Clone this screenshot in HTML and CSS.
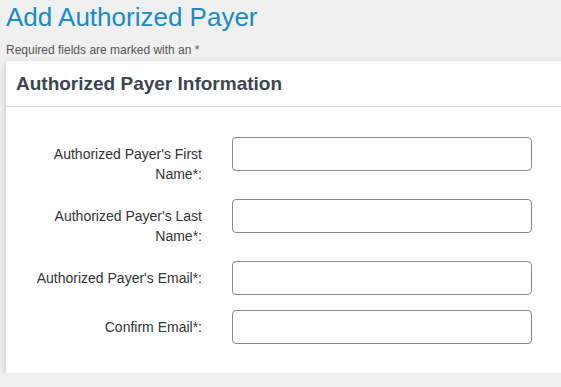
FILE: index.html
```html
<!DOCTYPE html>
<html>
<head>
<meta charset="utf-8">
<link rel="stylesheet" href="styles.css">
</head>
<body>
<div class="page">
  <h1 class="title">Add Authorized Payer</h1>
  <p class="note">Required fields are marked with an *</p>
  <div class="card">
    <div class="card-head">
      <h2 class="card-title">Authorized Payer Information</h2>
    </div>
    <form class="card-body">
      <div class="row">
        <label class="lbl">Authorized Payer's First Name*:</label>
        <input class="field" type="text">
      </div>
      <div class="row">
        <label class="lbl">Authorized Payer's Last Name*:</label>
        <input class="field" type="text">
      </div>
      <div class="row">
        <label class="lbl">Authorized Payer's Email*:</label>
        <input class="field" type="text">
      </div>
      <div class="row">
        <label class="lbl">Confirm Email*:</label>
        <input class="field" type="text">
      </div>
    </form>
  </div>
</div>
</body>
</html>
```
FILE: styles.css
```css
html, body {
  margin: 0;
  padding: 0;
  overflow: hidden;
  background: #f0f0f0;
  font-family: "Liberation Sans", Arial, sans-serif;
}
.page {
  padding: 0 0 0 6px;
}
.title {
  margin: 0;
  padding-top: 1px;
  font-size: 26px;
  font-weight: normal;
  line-height: 32px;
  color: #1a8bc9;
}
.note {
  margin: 9px 0 0 0;
  font-size: 12px;
  line-height: 16px;
  color: #555;
}
.card {
  margin-top: 3px;
  width: 580px;
  background: #fff;
  box-shadow: 0 2px 6px rgba(0,0,0,0.2);
}
.card-head {
  height: 45px;
  border-bottom: 1px solid #dcdcdc;
  display: flex;
  align-items: center;
  padding-left: 10px;
}
.card-title {
  margin: 0;
  font-size: 19px;
  font-weight: bold;
  color: #3b4650;
}
.card-body {
  margin: 0;
  padding: 30px 0 14px 16px;
}
.row {
  display: flex;
  align-items: flex-start;
  margin-bottom: 15px;
}
.lbl {
  width: 180px;
  padding-top: 7px;
  text-align: right;
  font-size: 14px;
  line-height: 20px;
  color: #333;
}
.field {
  margin: 0 0 0 30px;
  width: 300px;
  height: 34px;
  box-sizing: border-box;
  border: 1px solid #8a8a8a;
  border-radius: 4px;
  background: #fff;
  padding: 6px 10px;
  font-size: 14px;
}
```
